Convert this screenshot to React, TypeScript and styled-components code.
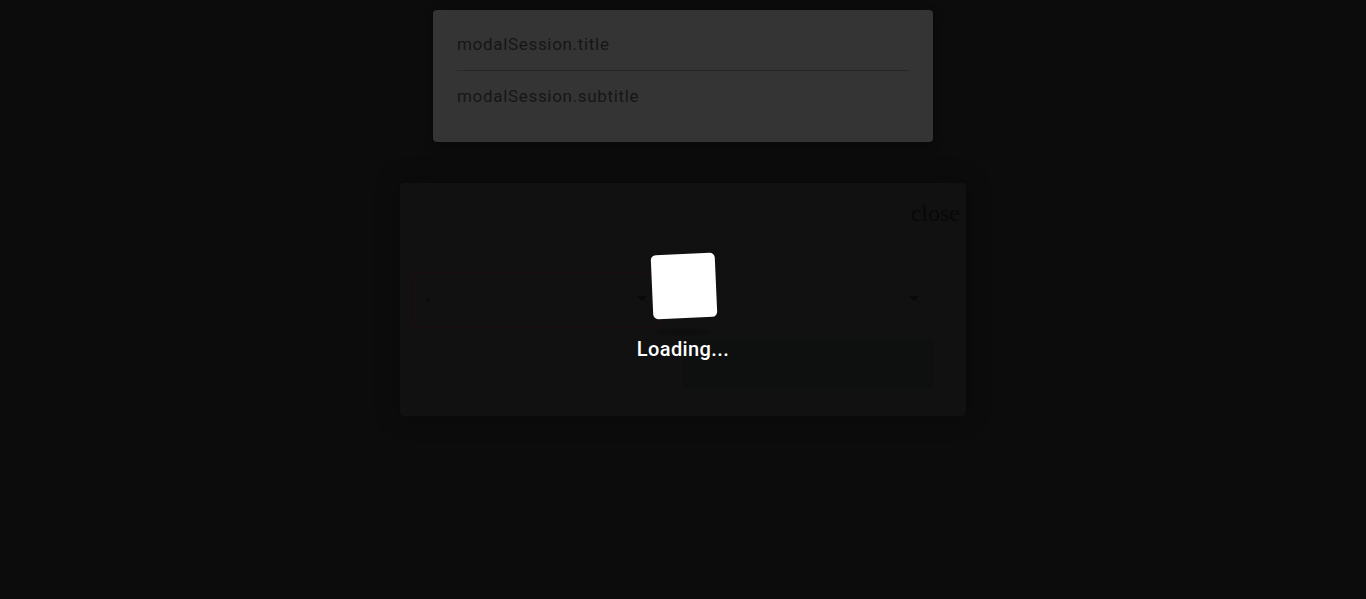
import React from "react";
import styled, { createGlobalStyle } from "styled-components";

const Global = createGlobalStyle`
  html, body { margin: 0; padding: 0; background: #0c0c0c; }
  body { font-family: Roboto, "Liberation Sans", sans-serif; }
`;

const Page = styled.div`
  min-height: 599px;
  background: #0c0c0c;
  display: flex;
  flex-direction: column;
  align-items: center;
  position: relative;
  overflow: hidden;
`;

const TopCard = styled.div`
  margin-top: 10px;
  width: 500px;
  height: 132px;
  box-sizing: border-box;
  background: #343434;
  border-radius: 4px;
  padding: 0 24px;
  box-shadow: 0 2px 10px rgba(0, 0, 0, 0.4);
`;

const CardLine = styled.div<{ $top: number }>`
  padding-top: ${(p) => p.$top}px;
  font-size: 17px;
  line-height: 22px;
  letter-spacing: 0.68px;
  color: #161616;
`;

const Divider = styled.div`
  height: 1px;
  background: #272727;
  margin-top: 15px;
`;

const Modal = styled.div`
  margin-top: 41px;
  width: 566px;
  height: 233px;
  box-sizing: border-box;
  background: #111111;
  border-radius: 4px;
  box-shadow: 0 0 24px rgba(0, 0, 0, 0.35);
  padding: 16px 6px 0 12px;
  display: flex;
  flex-direction: column;
`;

const CloseRow = styled.div`
  display: flex;
  justify-content: flex-end;
`;

const CloseText = styled.span`
  font-family: "Liberation Serif", "Times New Roman", serif;
  font-size: 24px;
  line-height: 28px;
  color: #080808;
`;

const Grid = styled.div`
  margin-top: 46px;
  display: grid;
  grid-template-columns: 249px 250px;
  column-gap: 22px;
  row-gap: 12px;
`;

const Select = styled.div<{ $bordered?: boolean }>`
  height: 54px;
  box-sizing: border-box;
  border: 1px solid ${(p) => (p.$bordered ? "#1e080a" : "transparent")};
  border-radius: 4px;
  display: flex;
  align-items: center;
  justify-content: space-between;
  padding: 0 13px 0 12px;
`;

const Asterisk = styled.span`
  font-size: 12px;
  color: #0a0a0a;
  margin-top: 4px;
`;

const Arrow = styled.span`
  width: 0;
  height: 0;
  margin-left: auto;
  margin-top: -4px;
  border-left: 5px solid transparent;
  border-right: 5px solid transparent;
  border-top: 5px solid #090909;
`;

const Button = styled.div`
  grid-column: 2;
  height: 49px;
  background: #0e1010;
  border-radius: 4px;
`;

const Overlay = styled.div`
  position: absolute;
  left: 0;
  right: 0;
  top: 254px;
  display: flex;
  flex-direction: column;
  align-items: center;
`;

const Cube = styled.div`
  width: 64px;
  height: 64px;
  background: #ffffff;
  border-radius: 5px;
  transform: rotate(-2.5deg);
  margin-left: 2px;
`;

const Shade = styled.div`
  width: 56px;
  height: 4px;
  margin-top: 12px;
  border-radius: 50%;
  background: rgba(0, 0, 0, 0.25);
  filter: blur(1px);
`;

const LoadingText = styled.div`
  margin-top: 3px;
  font-size: 20px;
  font-weight: 500;
  letter-spacing: 0.4px;
  color: #ffffff;
  line-height: 24px;
`;

export default function App() {
  return (
    <>
      <Global />
      <Page>
        <TopCard>
          <CardLine $top={23}>modalSession.title</CardLine>
          <Divider />
          <CardLine $top={14}>modalSession.subtitle</CardLine>
        </TopCard>
        <Modal>
          <CloseRow>
            <CloseText>close</CloseText>
          </CloseRow>
          <Grid>
            <Select $bordered>
              <Asterisk>*</Asterisk>
              <Arrow />
            </Select>
            <Select>
              <Arrow />
            </Select>
            <Button />
          </Grid>
        </Modal>
        <Overlay>
          <Cube />
          <Shade />
          <LoadingText>Loading...</LoadingText>
        </Overlay>
      </Page>
    </>
  );
}
